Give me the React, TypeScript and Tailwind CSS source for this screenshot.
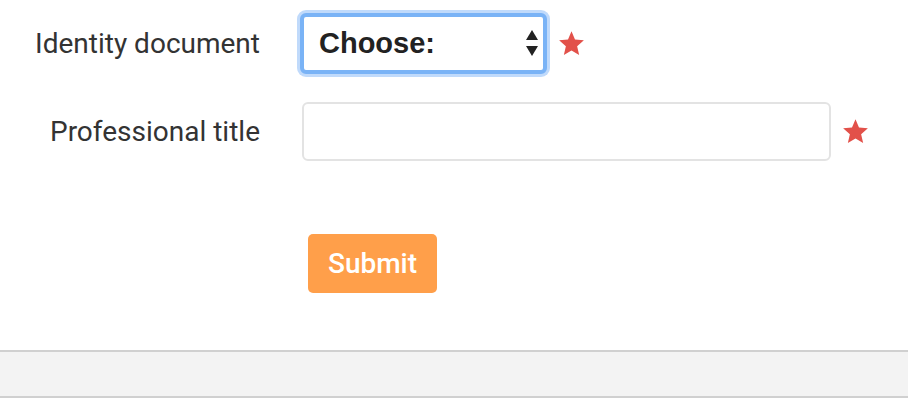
const labelCls =
  "w-[260px] shrink-0 text-right text-[28px] text-[#333] font-['Roboto',sans-serif]"

function Star() {
  return (
    <svg viewBox="0 0 24 24" className="w-[27px] h-[27px] shrink-0 ml-[11px]">
      <path
        d="M12 1.2l3.1 7.3 7.9.7-6 5.2 1.8 7.8L12 18.2l-6.8 4 1.8-7.8-6-5.2 7.9-.7z"
        fill="#e2514a"
      />
    </svg>
  )
}

export default function App() {
  return (
    <div className="w-[908px] h-[412px] bg-white overflow-hidden">
      <div className="pt-[13px]">
        <div className="flex items-center">
          <label className={labelCls}>Identity document</label>
          <div className="relative ml-[40px] w-[247px] h-[61px] rounded-[6px] border-4 border-[#7ab3f6] bg-white shadow-[0_0_0_3px_#c0dafb]">
            <select className="w-full h-full appearance-none bg-transparent pl-[15px] pr-[30px] text-[29px] font-bold text-[#222] font-['Liberation_Sans',Arial,sans-serif] outline-none">
              <option>Choose:</option>
            </select>
            <svg
              viewBox="0 0 12 26"
              className="pointer-events-none absolute right-[5px] top-[13px] w-[12px] h-[26px]"
            >
              <path d="M6 0L12 10H0z" fill="#222" />
              <path d="M6 26L12 16H0z" fill="#222" />
            </svg>
          </div>
          <Star />
        </div>

        <div className="flex items-center mt-[28px]">
          <label className={labelCls}>Professional title</label>
          <input
            type="text"
            className="ml-[42px] w-[529px] h-[59px] rounded-[6px] border-2 border-[#e3e3e3] bg-white px-3 outline-none"
          />
          <Star />
        </div>

        <button className="mt-[73px] ml-[308px] w-[129px] h-[59px] rounded-[5px] bg-[#ff9f4a] text-white text-[28px] font-medium font-['Roboto',sans-serif]">
          Submit
        </button>
      </div>

      <div className="mt-[57px] h-[48px] border-y-2 border-[#d0d0d0] bg-[#f3f3f3]" />
    </div>
  )
}
